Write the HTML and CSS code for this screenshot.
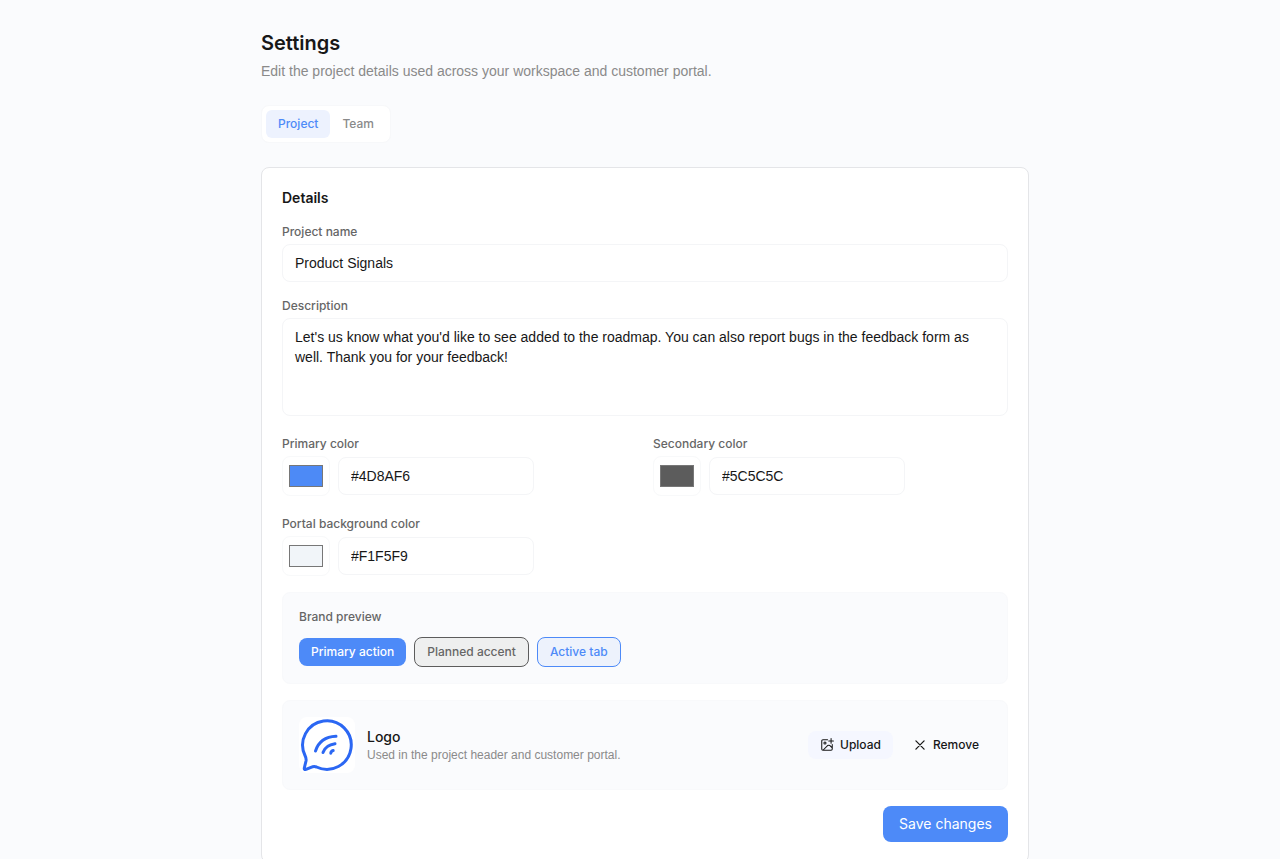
FILE: index.html
```html
<!DOCTYPE html>
<html lang="en">
<head>
<meta charset="utf-8">
<meta name="viewport" content="width=device-width, initial-scale=1">
<title>Settings</title>
<link rel="stylesheet" href="styles.css">
</head>
<body>
<main class="page">
  <header class="page-header">
    <h1>Settings</h1>
    <p>Edit the project details used across your workspace and customer portal.</p>
  </header>
  <nav class="tabs" aria-label="Settings sections">
    <button type="button" class="tab tab-active" aria-current="page">Project</button>
    <button type="button" class="tab">Team</button>
  </nav>
  <form class="card">
    <h2>Details</h2>
    <div class="field">
      <label for="name">Project name</label>
      <input class="control" id="name" type="text" value="Product Signals">
    </div>
    <div class="field">
      <label for="description">Description</label>
      <textarea class="control" id="description" rows="4">Let's us know what you'd like to see added to the roadmap. You can also report bugs in the feedback form as well. Thank you for your feedback!</textarea>
    </div>
    <div class="colors">
      <div class="field">
        <label for="primary">Primary color</label>
        <div class="color-row">
          <input class="swatch" type="color" value="#4d8af6" aria-label="Pick primary color">
          <input class="control hex" id="primary" type="text" value="#4D8AF6">
        </div>
      </div>
      <div class="field">
        <label for="secondary">Secondary color</label>
        <div class="color-row">
          <input class="swatch" type="color" value="#5c5c5c" aria-label="Pick secondary color">
          <input class="control hex" id="secondary" type="text" value="#5C5C5C">
        </div>
      </div>
      <div class="field">
        <label for="background">Portal background color</label>
        <div class="color-row">
          <input class="swatch" type="color" value="#f1f5f9" aria-label="Pick portal background color">
          <input class="control hex" id="background" type="text" value="#F1F5F9">
        </div>
      </div>
    </div>
    <section class="panel">
      <h3>Brand preview</h3>
      <div class="chips">
        <button type="button" class="chip chip-primary">Primary action</button>
        <button type="button" class="chip chip-accent">Planned accent</button>
        <button type="button" class="chip chip-tab">Active tab</button>
      </div>
    </section>
    <section class="panel logo-panel">
      <svg class="logo" viewBox="0 0 56 56" fill="none" stroke="#2b67f3" stroke-width="3" stroke-linecap="round" stroke-linejoin="round" aria-hidden="true">
        <path d="M6 38.500A24.300 24.300 0 1 1 17.500 50Q15 49 12 50.300L7 52.400Q5 53 5.300 51L7 44Q7.500 41.500 6 38.500Z"/>
        <path d="M16.500 34Q21 20 37 19.300M24 35.500Q26.500 28 36 26.700M31.800 36.200Q32 34 34.200 33.500"/>
      </svg>
      <div class="logo-text">
        <h3>Logo</h3>
        <p>Used in the project header and customer portal.</p>
      </div>
      <div class="logo-actions">
        <button type="button" class="action action-upload">
          <svg class="icon" viewBox="0 0 24 24" fill="none" stroke="currentColor" stroke-width="1.800" stroke-linecap="round" stroke-linejoin="round" aria-hidden="true"><path d="M13 3H5Q3 3 3 5v14q0 2 2 2h14q2 0 2-2v-8M19 1v8M15 5h8M5 21l8-8q2-1 4 0l4 4"/><circle cx="8.500" cy="8.500" r="1.800"/></svg>
          Upload
        </button>
        <button type="button" class="action">
          <svg class="icon" viewBox="0 0 24 24" fill="none" stroke="currentColor" stroke-width="2.200" stroke-linecap="round" aria-hidden="true"><path d="M5 5l14 14M19 5l-14 14"/></svg>
          Remove
        </button>
      </div>
    </section>
    <div class="form-actions">
      <button type="submit" class="save">Save changes</button>
    </div>
  </form>
</main>
</body>
</html>
```
FILE: styles.css
```css
* {
  box-sizing: border-box;
}

body {
  margin: 0;
  background: #fafbfd;
  color: #171717;
  font: 400 14px/20px "Liberation Sans", Arial, sans-serif;
}

h1, h2, h3, p {
  margin: 0;
}

h1, h2, h3, label, button {
  font-family: Inter, "Liberation Sans", sans-serif;
}

button, input, textarea {
  font-size: inherit;
  line-height: inherit;
  color: inherit;
}

input, textarea {
  font-family: inherit;
}

button {
  border: 0;
  background: none;
}

.page {
  max-width: 768px;
  margin: 0 auto;
  padding: 29px 0 32px;
  box-sizing: content-box;
  border-left: 10px solid transparent;
}

.page-header h1 {
  font-size: 20px;
  line-height: 28px;
  font-weight: 600;
}

.page-header p {
  margin-top: 4px;
  color: #8a8a8a;
}

.tabs {
  display: flex;
  width: fit-content;
  margin-top: 24px;
  padding: 4px;
  border: 1px solid #f7f8fa;
  border-radius: 8px;
  background: #fff;
}

.tab {
  padding: 6px 12px;
  border-radius: 6px;
  font-size: 12px;
  line-height: 16px;
  font-weight: 500;
  color: #8a8a8a;
}

.tab-active {
  background: #edf2fe;
  color: #4d8af8;
}

.card {
  display: flex;
  flex-direction: column;
  gap: 16px;
  margin-top: 24px;
  padding: 20px;
  border: 1px solid #e4e5e8;
  border-radius: 8px;
  background: #fff;
}

.card h2 {
  font-size: 14px;
  line-height: 20px;
  font-weight: 600;
}

.field {
  display: flex;
  flex-direction: column;
  gap: 4px;
  min-width: 0;
}

.field label,
.panel h3 {
  font-size: 12px;
  line-height: 16px;
  font-weight: 500;
  color: #666;
}

.control {
  width: 100%;
  padding: 8px 12px;
  border: 1px solid #f4f5f7;
  border-radius: 8px;
  background: #fff;
  line-height: 20px;
}

textarea.control {
  display: block;
  height: 98px;
  resize: none;
}

.colors {
  display: grid;
  grid-template-columns: 1fr 1fr;
  gap: 20px 16px;
  padding-top: 4px;
}

.color-row {
  display: flex;
  align-items: center;
  gap: 8px;
}

.swatch {
  width: 48px;
  height: 40px;
  padding: 4px;
  border: 1px solid #f8f9fa;
  border-radius: 8px;
  background: #fff;
}

.hex {
  width: 196px;
}

.panel {
  padding: 16px;
  border: 1px solid #f8f9fb;
  border-radius: 8px;
  background: #fafbfd;
}

.chips {
  display: flex;
  align-items: center;
  gap: 8px;
  margin-top: 12px;
}

.chip {
  padding: 6px 12px;
  border-radius: 8px;
  font-size: 12px;
  line-height: 16px;
  font-weight: 500;
}

.chip-primary {
  background: #4d8af8;
  color: #fff;
}

.chip-accent {
  border: 1px solid #5c5c5c;
  background: #eeefef;
  color: #666;
}

.chip-tab {
  border: 1px solid #4d8af8;
  background: #edf2fc;
  color: #4d8af8;
}

.logo-panel {
  display: flex;
  align-items: center;
  gap: 12px;
}

.logo {
  width: 56px;
  height: 56px;
  border-radius: 8px;
  background: #fff;
}

.logo-text {
  flex: 1;
}

.logo-text h3 {
  font-size: 14px;
  line-height: 20px;
  font-weight: 500;
  color: #171717;
}

.logo-text p {
  font-size: 12px;
  line-height: 16px;
  color: #8a8a8a;
}

.logo-actions {
  display: flex;
  gap: 8px;
}

.action {
  display: flex;
  align-items: center;
  gap: 6px;
  padding: 6px 12px;
  border-radius: 8px;
  font-size: 12px;
  line-height: 16px;
  font-weight: 500;
}

.action-upload {
  background: #f5f7ff;
}

.icon {
  width: 14px;
  height: 14px;
}

.form-actions {
  display: flex;
  justify-content: flex-end;
}

.save {
  padding: 8px 16px;
  border-radius: 8px;
  background: #4d8af8;
  color: #fff;
}
```
